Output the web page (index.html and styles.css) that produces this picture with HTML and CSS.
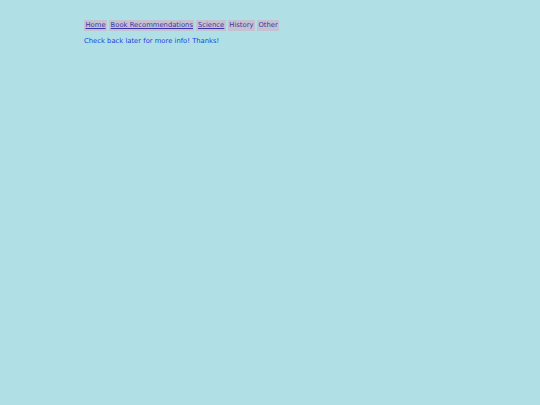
FILE: index.html
```html
<!DOCTYPE html>
<html>
<head>
<meta charset="utf-8">
<link rel="stylesheet" href="styles.css">
</head>
<body>
<div class="page">
  <ul class="nav">
    <li><a href="#">Home</a></li>
    <li><a href="#">Book Recommendations</a></li>
    <li><a href="#">Science</a></li>
    <li><span>History</span></li>
    <li><span>Other</span></li>
  </ul>
  <p class="note">Check back later for more info! Thanks!</p>
</div>
</body>
</html>
```
FILE: styles.css
```css
html, body {
  margin: 0;
  background: #b0e0e6;
}
body {
  font-family: "DejaVu Sans", Verdana, sans-serif;
  font-size: 6.8px;
}
.page {
  padding: 20px 0 0 84px;
}
.nav {
  list-style: none;
  margin: 0;
  padding: 0;
  display: flex;
  gap: 2px;
}
.nav li {
  background: #c4c2d0;
  padding: 1px 1.5px;
  line-height: 9px;
  color: #3b35a8;
}
.nav a {
  color: #3b35a8;
  text-decoration: underline;
}
.note {
  margin: 6px 0 0;
  line-height: 9px;
  color: #2040e0;
}
```
